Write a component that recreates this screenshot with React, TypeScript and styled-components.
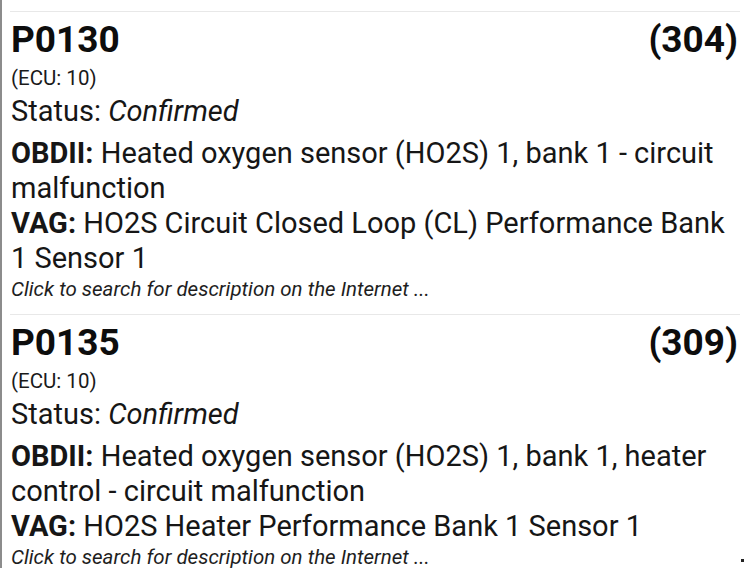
import React from "react";
import styled, { createGlobalStyle } from "styled-components";

const Global = createGlobalStyle`
  html, body { margin: 0; padding: 0; background: #ffffff; }
  body { font-family: Roboto, "Noto Sans", "Liberation Sans", sans-serif; color: #151515; }
`;

const Screen = styled.div`
  width: 750px;
  height: 568px;
  overflow: hidden;
  box-sizing: border-box;
  border-left: 2px solid #8c8c8c;
  padding: 11px 10px 0 8px;
  position: relative;
`;

const Entry = styled.section`
  border-top: 1px solid #e8e8e8;
  padding: 0 0 12px 1px;
  display: flex;
  flex-direction: column;
`;

const Header = styled.div`
  display: flex;
  justify-content: space-between;
  align-items: baseline;
  padding: 3px 2px 0 0;
  line-height: 50px;
`;

const Code = styled.span`
  font-size: 37px;
  font-weight: 700;
  color: #0d0d0d;
`;

const Ecu = styled.div`
  font-size: 20.5px;
  line-height: 26px;
  color: #1a1a1a;
`;

const Line = styled.div<{ $gap?: number }>`
  font-size: 29px;
  line-height: 35px;
  margin-top: ${(p) => p.$gap ?? 0}px;
  color: #161616;
`;

const Label = styled.b`
  font-weight: 700;
`;

const Hint = styled.div`
  font-size: 20.5px;
  font-style: italic;
  line-height: 26px;
  color: #1e1e1e;
`;

const Dot = styled.span`
  position: absolute;
  right: 6px;
  bottom: 6px;
  width: 3px;
  height: 3px;
  background: #222;
`;

type Trouble = {
  code: string;
  num: number;
  ecu: string;
  status: string;
  obd: string;
  vag: string;
};

const codes: Trouble[] = [
  {
    code: "P0130",
    num: 304,
    ecu: "10",
    status: "Confirmed",
    obd: "Heated oxygen sensor (HO2S) 1, bank 1 - circuit malfunction",
    vag: "HO2S Circuit Closed Loop (CL) Performance Bank 1 Sensor 1",
  },
  {
    code: "P0135",
    num: 309,
    ecu: "10",
    status: "Confirmed",
    obd: "Heated oxygen sensor (HO2S) 1, bank 1, heater control - circuit malfunction",
    vag: "HO2S Heater Performance Bank 1 Sensor 1",
  },
];

export default function App() {
  return (
    <>
      <Global />
      <Screen>
        {codes.map((c) => (
          <Entry key={c.code}>
            <Header>
              <Code>{c.code}</Code>
              <Code>({c.num})</Code>
            </Header>
            <Ecu>(ECU: {c.ecu})</Ecu>
            <Line $gap={3}>
              Status: <i>{c.status}</i>
            </Line>
            <Line $gap={7}>
              <Label>OBDII:</Label> {c.obd}
            </Line>
            <Line>
              <Label>VAG:</Label> {c.vag}
            </Line>
            <Hint>Click to search for description on the Internet ...</Hint>
          </Entry>
        ))}
        <Dot />
      </Screen>
    </>
  );
}
